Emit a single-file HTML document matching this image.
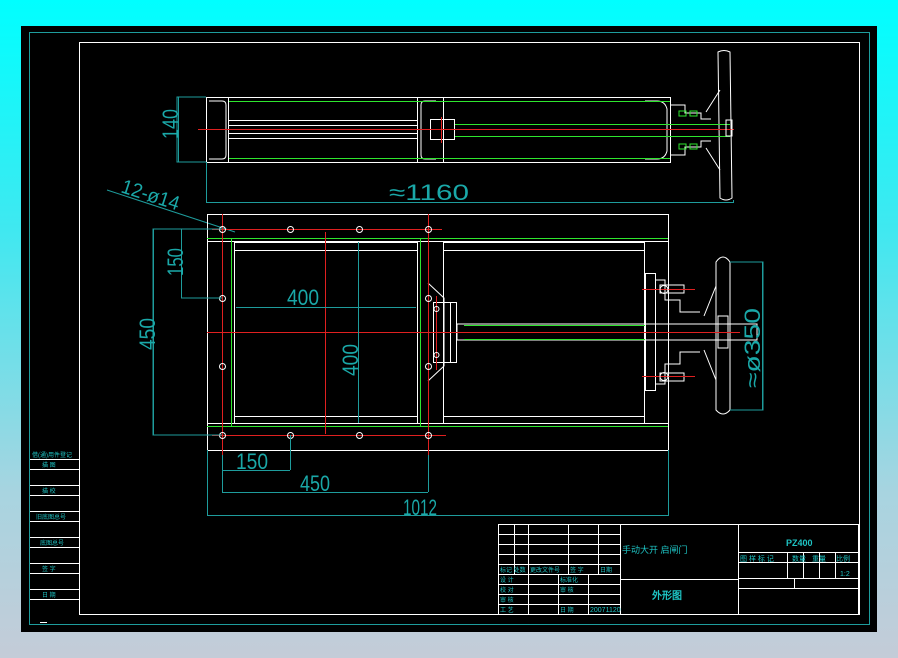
<!DOCTYPE html>
<html><head><meta charset="utf-8"><style>
html,body{margin:0;padding:0;width:898px;height:658px;overflow:hidden;background:linear-gradient(#00ffff 0%,#40e8f0 35%,#a8d4e0 75%,#c4ccd8 100%);}
svg{position:absolute;left:0;top:0}
text{font-family:"Liberation Sans",sans-serif;}
</style></head><body>
<svg width="898" height="658" viewBox="0 0 898 658">
<rect x="21" y="26" width="856" height="606" fill="#000"/>
<g fill="none" stroke-width="1">
<rect x="29.5" y="32.5" width="840" height="592" stroke="#1e9c9c"/>
<rect x="79.5" y="42.5" width="780" height="572" stroke="#fff"/>
<!-- top view -->
<g stroke="#fff">
<rect x="206.5" y="97.5" width="464" height="65"/>
<line x1="228.5" y1="97" x2="228.5" y2="162"/>
<line x1="417.5" y1="97" x2="417.5" y2="162"/>
<line x1="443.5" y1="97" x2="443.5" y2="162"/>
<line x1="228" y1="120.5" x2="417" y2="120.5"/>
<line x1="228" y1="125.5" x2="417" y2="125.5"/>
<line x1="228" y1="133.5" x2="417" y2="133.5"/>
<line x1="228" y1="138.5" x2="417" y2="138.5"/>
<path d="M209 101h13q4 0 4 4v50q0 4-4 4h-13"/>
<path d="M436 101h-11q-4 0-4 4v50q0 4 4 4h11"/>
<rect x="430.5" y="119.5" width="24" height="20"/>
<path d="M645 101h12q8 0 10 8v42q-2 8-10 8h-12"/>
<path d="M670 105h15v8h16v6h10M670 155h15v-8h16v-6h10"/>
<path d="M718 52q6-3 12 0l2 146q-6 4-12 0z"/>
<path d="M706 112l14-22M706 148l14 22"/>
</g>
<g stroke="#2ee62e"><line x1="229" y1="101.5" x2="670" y2="101.5"/><line x1="229" y1="158.5" x2="670" y2="158.5"/><line x1="455" y1="124.5" x2="730" y2="124.5"/><line x1="455" y1="136.5" x2="730" y2="136.5"/>
<rect x="679" y="111" width="7" height="5"/><rect x="690" y="111" width="7" height="5"/><rect x="679" y="144" width="7" height="5"/><rect x="690" y="144" width="7" height="5"/></g>
<line x1="198" y1="129.5" x2="734" y2="129.5" stroke="#e02020"/>
<line x1="441.5" y1="117" x2="441.5" y2="143" stroke="#e02020"/>
<rect x="726" y="120" width="6" height="16" stroke="#fff"/>
<g stroke="#1e9c9c"><path d="M206 97H177V162H206"/><line x1="178.5" y1="97" x2="178.5" y2="162"/>
<path d="M206.5 162V202M733.5 200V203"/><line x1="206" y1="202.5" x2="733" y2="202.5"/>
<line x1="107" y1="190" x2="235" y2="232"/></g>
<!-- plan view -->
<g stroke="#fff">
<rect x="207.5" y="214.5" width="461" height="236"/>
<line x1="207" y1="241.5" x2="668" y2="241.5"/>
<line x1="207" y1="423.5" x2="668" y2="423.5"/>
<rect x="234.5" y="242.5" width="183" height="181"/>
<line x1="234" y1="250.5" x2="418" y2="250.5"/><line x1="234" y1="416.5" x2="418" y2="416.5"/>
<rect x="443.5" y="242.5" width="201" height="181"/>
<line x1="444" y1="250.5" x2="645" y2="250.5"/><line x1="444" y1="416.5" x2="645" y2="416.5"/>
<line x1="428.5" y1="242" x2="428.5" y2="423"/>
<path d="M428 283l16 15v68l-16 15"/>
<rect x="433.5" y="302.5" width="23" height="60"/>
<line x1="450.5" y1="302" x2="450.5" y2="362"/>
<path d="M457 324h300v16h-300z"/>
<rect x="645.5" y="273.5" width="10" height="117"/>
<path d="M655 280h10v20h15v12h20M655 384h10v-20h15v-12h20"/>
<rect x="660" y="285" width="24" height="8"/><rect x="660" y="373" width="24" height="8"/>
<path d="M716 262q7-10 14 0v148q-7 8-14 0z"/>
<path d="M704 316l12-30M704 350l12 30"/>
<rect x="718" y="316" width="10" height="32"/>
</g>
<g stroke="#2ee62e"><line x1="207" y1="238.5" x2="668" y2="238.5"/><line x1="207" y1="426.5" x2="668" y2="426.5"/><line x1="231.5" y1="238" x2="231.5" y2="427"/><line x1="420.5" y1="238" x2="420.5" y2="427"/><line x1="464" y1="325.5" x2="645" y2="325.5"/><line x1="464" y1="339.5" x2="645" y2="339.5"/></g>
<g stroke="#e02020"><line x1="222.5" y1="214" x2="222.5" y2="455"/><line x1="428.5" y1="214" x2="428.5" y2="455"/><line x1="325.5" y1="232" x2="325.5" y2="434"/><line x1="207" y1="332.5" x2="740" y2="332.5"/><line x1="212" y1="229.5" x2="442" y2="229.5"/><line x1="212" y1="435.5" x2="446" y2="435.5"/><line x1="642" y1="289.5" x2="695" y2="289.5"/><line x1="642" y1="376.5" x2="695" y2="376.5"/><line x1="436.5" y1="296" x2="436.5" y2="370"/></g>
<g stroke="#fff"><circle cx="222.5" cy="229.5" r="3"/><circle cx="290.5" cy="229.5" r="3"/><circle cx="359.5" cy="229.5" r="3"/><circle cx="428.5" cy="229.5" r="3"/><circle cx="222.5" cy="435.5" r="3"/><circle cx="290.5" cy="435.5" r="3"/><circle cx="359.5" cy="435.5" r="3"/><circle cx="428.5" cy="435.5" r="3"/><circle cx="222.5" cy="298.5" r="3"/><circle cx="222.5" cy="366.5" r="3"/><circle cx="428.5" cy="298.5" r="3"/><circle cx="428.5" cy="366.5" r="3"/><circle cx="436.5" cy="309" r="2.5"/><circle cx="436.5" cy="355" r="2.5"/><circle cx="664" cy="289.5" r="4"/><circle cx="664" cy="376.5" r="4"/></g>
<g stroke="#1e9c9c">
<path d="M222 229H153V435H222"/><line x1="153.5" y1="229" x2="153.5" y2="435"/>
<path d="M181.5 229V298H222"/>
<line x1="236" y1="307.5" x2="416" y2="307.5"/>
<line x1="358.5" y1="242" x2="358.5" y2="423"/>
<path d="M222.5 455V492M290.5 435V470M428.5 455V492"/><line x1="222" y1="470.5" x2="290" y2="470.5"/><line x1="222" y1="492.5" x2="428" y2="492.5"/>
<path d="M207.5 450V516M668.5 450V516"/><line x1="207" y1="515.5" x2="668" y2="515.5"/>
<path d="M730 262H763V410H730"/><line x1="762.5" y1="262" x2="762.5" y2="410"/>
</g>
<g stroke="#fff">
<rect x="498.5" y="524.5" width="360" height="90"/>
<line x1="620.5" y1="524" x2="620.5" y2="614"/><line x1="738.5" y1="524" x2="738.5" y2="614"/>
<line x1="620" y1="579.5" x2="738" y2="579.5"/>
<path d="M498 534.5h122M498 544.5h122M498 554.5h122M498 564.5h122M498 574.5h122M498 584.5h122M498 594.5h122M498 604.5h122"/>
<path d="M514.5 524v50M528.5 524v90M568.5 524v50M598.5 524v50M558.5 574v40M588.5 574v40"/>
<path d="M738 552.5h120M738 562.5h120M738 578.5h120M738 588.5h120"/>
<path d="M787.5 552v26M803.5 552v26M819.5 552v26M835.5 552v26M794.5 578v10"/>
<line x1="79.5" y1="450" x2="79.5" y2="600"/>
<path d="M30 459.5h49M30 469.5h49M30 485.5h49M30 495.5h49M30 511.5h49M30 521.5h49M30 537.5h49M30 547.5h49M30 563.5h49M30 573.5h49M30 589.5h49M30 599.5h49"/>
<line x1="40" y1="622.5" x2="47" y2="622.5"/>
</g>
</g>
<g fill="#1aa8a8" stroke="none" font-family="Liberation Sans,sans-serif">
<text x="389" y="200" font-size="22" textLength="80" lengthAdjust="spacingAndGlyphs">≈1160</text>
<text transform="translate(178,139) rotate(-90)" font-size="22" textLength="30" lengthAdjust="spacingAndGlyphs">140</text>
<text transform="translate(120,192) rotate(18)" font-size="20" textLength="60" lengthAdjust="spacingAndGlyphs">12-ø14</text>
<text transform="translate(183,276) rotate(-90)" font-size="22" textLength="28" lengthAdjust="spacingAndGlyphs">150</text>
<text transform="translate(155,350) rotate(-90)" font-size="22" textLength="32" lengthAdjust="spacingAndGlyphs">450</text>
<text x="287" y="305" font-size="22" textLength="32" lengthAdjust="spacingAndGlyphs">400</text>
<text transform="translate(358,376) rotate(-90)" font-size="22" textLength="32" lengthAdjust="spacingAndGlyphs">400</text>
<text x="236" y="469" font-size="22" textLength="32" lengthAdjust="spacingAndGlyphs">150</text>
<text x="300" y="491" font-size="22" textLength="30" lengthAdjust="spacingAndGlyphs">450</text>
<text x="403" y="515" font-size="22" textLength="34" lengthAdjust="spacingAndGlyphs">1012</text>
<text transform="translate(760,388) rotate(-90)" font-size="22" textLength="80" lengthAdjust="spacingAndGlyphs">≈ø350</text>
</g>
<g fill="#1ec4c4" font-size="8" font-family="Liberation Sans,'Noto Sans CJK SC',sans-serif">
<text x="622" y="553" font-size="9">手动大开 启闸门</text>
<text x="652" y="599" font-size="10" font-weight="bold">外形图</text>
<text x="786" y="546" font-size="9" font-weight="bold">PZ400</text>
<text x="740" y="561" font-size="7">图 样 标 记</text><text x="792" y="561" font-size="7">数量</text><text x="812" y="561" font-size="7">重量</text><text x="836" y="561" font-size="7">比例</text>
<text x="840" y="576" font-size="7">1:2</text>
<text x="590" y="612" font-size="7">20071120</text>
<text x="500" y="572" font-size="6">标记 处数</text><text x="530" y="572" font-size="6">更改文件号</text><text x="570" y="572" font-size="6">签 字</text><text x="600" y="572" font-size="6">日期</text>
<text x="500" y="582" font-size="6">设 计</text><text x="560" y="582" font-size="6">标准化</text>
<text x="500" y="592" font-size="6">校 对</text><text x="560" y="592" font-size="6">审 核</text>
<text x="500" y="602" font-size="6">审 核</text>
<text x="500" y="612" font-size="6">工 艺</text><text x="560" y="612" font-size="6">日 期</text>
<text x="32" y="457" font-size="6">借(通)用件登记</text><text x="42" y="467" font-size="6">描 图</text><text x="42" y="493" font-size="6">描 校</text><text x="36" y="519" font-size="6">旧底图总号</text><text x="40" y="545" font-size="6">底图总号</text><text x="42" y="571" font-size="6">签 字</text><text x="42" y="597" font-size="6">日 期</text>
</g>
</svg>
</body></html>
